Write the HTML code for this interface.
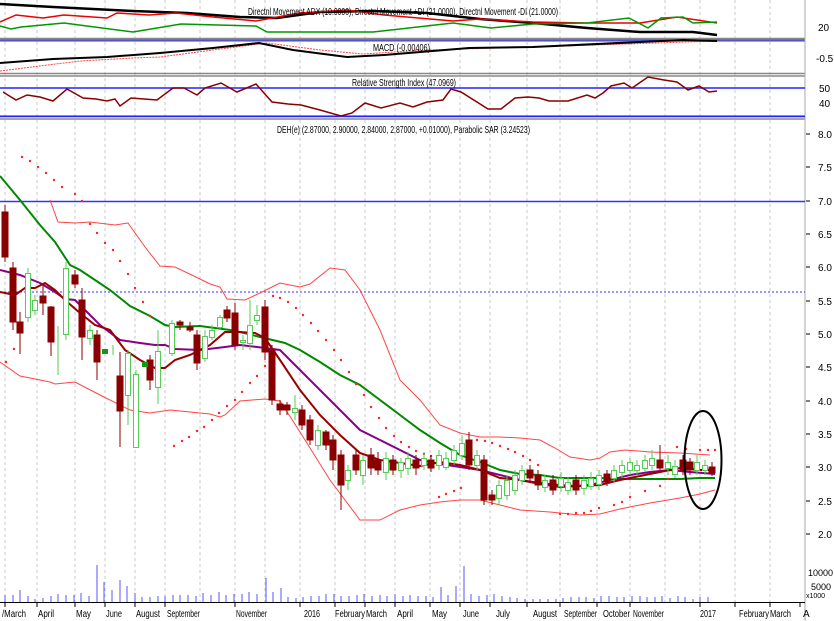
<!DOCTYPE html>
<html><head><style>
html,body{margin:0;padding:0;background:#fff;width:834px;height:621px;overflow:hidden}
svg{display:block;font-family:"Liberation Sans",Arial,sans-serif}
</style></head><body>
<svg width="834" height="621" viewBox="0 0 834 621" xmlns="http://www.w3.org/2000/svg">
<rect width="834" height="621" fill="#fff"/>
<g stroke="#c8c8c8" stroke-width="1" stroke-dasharray="3,3">
<path d="M5 0V602M37 0V602M75 0V602M105 0V602M135 0V602M165 0V602M200 0V602M235 0V602M265 0V602M300 0V602M335 0V602M365 0V602M395 0V602M430 0V602M460 0V602M490 0V602M527 0V602M560 0V602M597 0V602M630 0V602M665 0V602M700 0V602M735 0V602M770 0V602"/>
</g>
<g stroke="#888" stroke-width="1.5">
<path d="M0 38.5H805M0 41H805M0 73.5H805M0 76H805M0 116H805M0 119H805"/>
</g>
<path d="M0 40H805" stroke="#33f" stroke-width="1.2"/>
<path d="M805 0V621" stroke="#aaa"/>
<!-- ADX panel -->
<polyline fill="none" stroke="#000" stroke-width="2.5" points="0,4 53,7 133,11 187,13 240,17 277,18 320,12 373,11 427,13 480,19 533,23 587,28 640,32 693,32 717,35"/>
<polyline fill="none" stroke="#e00" stroke-width="1.5" points="0,22 16,15 43,18 64,15 107,18 117,13 149,15 176,13 213,17 256,21 299,13 347,10 384,15 453,21 480,19 533,22 587,23 640,23 677,17 717,23"/>
<polyline fill="none" stroke="#090" stroke-width="1.5" points="0,26 11,29 21,27 64,23 133,32 181,24 256,26 267,32 373,32 453,23 491,28 533,24 587,23 629,18 648,28 661,18 683,17 693,23 717,22"/>
<text x="248" y="15" font-size="10.5" fill="#000" textLength="310" lengthAdjust="spacingAndGlyphs">Directnl Movement ADX (10.0000), Directnl Movement +DI (21.0000), Directnl Movement -DI (21.0000)</text>
<!-- MACD panel -->
<polyline fill="none" stroke="#f44" stroke-width="1" stroke-dasharray="2,1" points="0,71 80,61 133,58 160,57 213,50 267,43 320,50 363,54 427,50 533,47 717,41"/>
<polyline fill="none" stroke="#000" stroke-width="2" points="0,63 53,59 107,57 160,53 213,48 259,43 293,50 347,57 384,55 469,48 533,47 640,42 683,40 717,41"/>
<text x="373" y="51" font-size="10.5" fill="#000" textLength="57" lengthAdjust="spacingAndGlyphs">MACD (-0.00406)</text>
<!-- RSI panel -->
<path d="M0 88H805M0 116.5H805" stroke="#22f" stroke-width="1.5"/>
<polyline fill="none" stroke="#800" stroke-width="1.5" points="3,92 16,100 27,95 40,97 53,101 67,89 83,98 96,99 107,101 115,99 120,106 131,98 144,99 157,100 173,88 184,88 197,95 205,88 221,83 237,92 256,84 272,102 288,104 301,105 320,110 341,116 352,113 365,103 381,108 400,103 413,107 427,102 443,100 451,89 461,92 488,109 501,109 515,98 528,97 539,98 549,101 568,101 587,95 595,98 603,93 611,86 624,83 632,88 648,77 664,80 677,82 688,90 699,86 709,92 717,91"/>
<text x="352" y="86" font-size="10.5" fill="#000" textLength="104" lengthAdjust="spacingAndGlyphs">Relative Strength Index (47.0969)</text>
<g font-size="10" fill="#000">
<text x="818" y="31">20</text>
<text x="816" y="62">-0.5</text>
<text x="819" y="92">50</text>
<text x="819" y="107">40</text>
</g>
<!-- main panel -->
<path d="M0 201.5H805" stroke="#33f" stroke-width="1.5"/>
<path d="M0 292H805" stroke="#33f" stroke-width="1" stroke-dasharray="2,2"/>
<text x="277" y="133" font-size="10.5" fill="#000" textLength="253" lengthAdjust="spacingAndGlyphs">DEH(e) (2.87000, 2.90000, 2.84000, 2.87000, +0.01000), Parabolic SAR (3.24523)</text>
<polyline fill="none" stroke="#f44" stroke-width="1" points="50,200 58,222 75,223 90,222 115,225 128,223 145,247 160,266 175,267 200,279 210,284 220,287 227,299 245,300 262,292 280,283 300,287 310,284 330,268 345,270 360,290 380,330 400,380 420,400 440,425 460,433 480,437 500,437 520,438 540,440 555,448 570,457 590,460 600,458 610,452 625,450 650,452 680,453 710,455"/>
<polyline fill="none" stroke="#f44" stroke-width="1" points="0,362 20,376 40,380 50,382 55,384 75,382 100,395 130,410 150,413 170,410 210,414 220,417 225,415 240,401 265,399 280,401 300,432 330,480 360,520 380,520 400,510 420,505 440,502 460,500 480,500 500,505 520,510 550,512 580,515 600,514 620,509 650,503 680,498 700,494 715,490"/>
<polyline fill="none" stroke="#080" stroke-width="2" points="0,176 20,200 40,225 55,242 70,265 80,270 95,280 110,290 130,306 150,316 165,325 175,327 200,326 230,330 240,332 260,337 285,343 300,350 320,362 340,375 360,385 380,400 400,415 420,430 440,443 460,455 480,462 500,470 520,474 540,475 560,478 580,478 600,478 620,479 640,479 660,479 680,479 700,478 715,478"/>
<polyline fill="none" stroke="#808" stroke-width="2" points="0,270 20,275 40,283 55,292 65,299 75,300 85,310 100,325 120,340 140,343 155,345 165,345 175,349 200,350 225,347 240,345 265,348 280,350 300,370 320,390 340,410 360,430 380,440 400,450 420,460 440,464 460,467 480,470 500,475 520,480 540,483 560,485 575,486 590,485 610,480 630,475 650,472 670,470 690,472 715,474"/>
<polyline fill="none" stroke="#900" stroke-width="2" points="0,292 15,295 25,288 35,288 45,283 55,290 65,300 80,313 95,325 110,330 125,350 140,360 155,368 165,368 175,360 190,355 210,345 225,332 240,332 255,333 265,338 280,360 300,390 320,415 340,435 360,453 380,460 400,463 420,466 440,462 460,465 480,470 500,478 520,480 540,484 560,487 580,486 600,485 620,480 640,476 660,472 680,468 700,470 715,470"/>
<g fill="#f22">
<circle cx="22" cy="157" r="1.2"/><circle cx="30" cy="161" r="1.2"/><circle cx="38" cy="167" r="1.2"/><circle cx="46" cy="173" r="1.2"/><circle cx="54" cy="180" r="1.2"/><circle cx="62" cy="187" r="1.2"/><circle cx="75" cy="194" r="1.2"/><circle cx="82" cy="201" r="1.2"/><circle cx="90" cy="224" r="1.2"/><circle cx="97" cy="233" r="1.2"/><circle cx="105" cy="243" r="1.2"/><circle cx="113" cy="250" r="1.2"/><circle cx="120" cy="261" r="1.2"/><circle cx="128" cy="274" r="1.2"/><circle cx="135" cy="288" r="1.2"/><circle cx="143" cy="302" r="1.2"/><circle cx="150" cy="316" r="1.2"/>
<circle cx="6" cy="362" r="1.2"/><circle cx="14" cy="349" r="1.2"/>
<circle cx="174" cy="446" r="1.2"/><circle cx="182" cy="441" r="1.2"/><circle cx="189" cy="437" r="1.2"/><circle cx="197" cy="431" r="1.2"/><circle cx="204" cy="427" r="1.2"/><circle cx="212" cy="420" r="1.2"/><circle cx="219" cy="413" r="1.2"/><circle cx="227" cy="406" r="1.2"/><circle cx="235" cy="400" r="1.2"/><circle cx="242" cy="392" r="1.2"/><circle cx="250" cy="383" r="1.2"/><circle cx="257" cy="376" r="1.2"/><circle cx="265" cy="366" r="1.2"/>
<circle cx="273" cy="296" r="1.2"/><circle cx="280" cy="298" r="1.2"/><circle cx="288" cy="302" r="1.2"/><circle cx="296" cy="308" r="1.2"/><circle cx="303" cy="315" r="1.2"/><circle cx="311" cy="323" r="1.2"/><circle cx="318" cy="331" r="1.2"/><circle cx="326" cy="340" r="1.2"/><circle cx="334" cy="350" r="1.2"/><circle cx="341" cy="360" r="1.2"/><circle cx="349" cy="372" r="1.2"/><circle cx="356" cy="384" r="1.2"/><circle cx="364" cy="395" r="1.2"/><circle cx="371" cy="407" r="1.2"/><circle cx="379" cy="418" r="1.2"/><circle cx="386" cy="428" r="1.2"/><circle cx="394" cy="436" r="1.2"/><circle cx="401" cy="442" r="1.2"/><circle cx="409" cy="447" r="1.2"/><circle cx="416" cy="451" r="1.2"/><circle cx="424" cy="454" r="1.2"/><circle cx="431" cy="456" r="1.2"/>
<circle cx="439" cy="497" r="1.2"/><circle cx="446" cy="494" r="1.2"/><circle cx="454" cy="491" r="1.2"/><circle cx="461" cy="488" r="1.2"/>
<circle cx="477" cy="440" r="1.2"/><circle cx="485" cy="441" r="1.2"/><circle cx="492" cy="443" r="1.2"/><circle cx="500" cy="446" r="1.2"/><circle cx="508" cy="449" r="1.2"/><circle cx="515" cy="452" r="1.2"/><circle cx="523" cy="456" r="1.2"/><circle cx="530" cy="460" r="1.2"/><circle cx="538" cy="465" r="1.2"/>
<circle cx="560" cy="514" r="1.2"/><circle cx="568" cy="514" r="1.2"/><circle cx="576" cy="513" r="1.2"/><circle cx="584" cy="513" r="1.2"/><circle cx="591" cy="511" r="1.2"/><circle cx="599" cy="508" r="1.2"/><circle cx="614" cy="505" r="1.2"/><circle cx="622" cy="502" r="1.2"/><circle cx="630" cy="497" r="1.2"/><circle cx="645" cy="491" r="1.2"/><circle cx="660" cy="486" r="1.2"/><circle cx="668" cy="479" r="1.2"/>
<circle cx="677" cy="447" r="1.2"/><circle cx="686" cy="449" r="1.2"/><circle cx="700" cy="450" r="1.2"/><circle cx="708" cy="450" r="1.2"/><circle cx="715" cy="450" r="1.2"/>
</g>
<g stroke="#800" fill="#800">
<path d="M5 205V262M13 262V330M20 312V354M43 285V315M51 306V356M75 270V288M82 288V360M97 330V380M120 352V447M150 355V390M180 320V330M190 322V332M197 330V370M227 306V322M235 303V350M265 300V360M272 345V405M280 400V415M287 402V415M302 405V430M310 415V445M326 430V450M333 435V470M341 450V510M356 450V475M371 448V475M378 452V475M393 455V475M416 455V475M431 455V472M469 432V470M484 455V505M492 490V505M530 465V482M538 470V490M553 475V495M576 475V495M607 470V486M660 445V470M683 455V475M690 458V475M712 462V476"/>
<rect x="2" y="212" width="6" height="45"/><rect x="10" y="268" width="6" height="54"/><rect x="17" y="322" width="6" height="11"/><rect x="40" y="296" width="6" height="7"/><rect x="48" y="307" width="6" height="35"/><rect x="72" y="275" width="6" height="9"/><rect x="79" y="300" width="6" height="37"/><rect x="94" y="335" width="6" height="27"/><rect x="117" y="376" width="6" height="35"/><rect x="147" y="360" width="6" height="20"/><rect x="177" y="322" width="6" height="3"/><rect x="187" y="327" width="6" height="3"/><rect x="194" y="335" width="6" height="28"/><rect x="224" y="310" width="6" height="8"/><rect x="232" y="313" width="6" height="32"/><rect x="262" y="307" width="6" height="45"/><rect x="269" y="350" width="6" height="50"/><rect x="277" y="404" width="6" height="6"/><rect x="284" y="405" width="6" height="5"/><rect x="299" y="410" width="6" height="15"/><rect x="307" y="420" width="6" height="20"/><rect x="323" y="432" width="6" height="13"/><rect x="330" y="440" width="6" height="20"/><rect x="338" y="455" width="6" height="30"/><rect x="353" y="455" width="6" height="15"/><rect x="368" y="455" width="6" height="13"/><rect x="375" y="460" width="6" height="10"/><rect x="390" y="460" width="6" height="10"/><rect x="413" y="460" width="6" height="8"/><rect x="428" y="460" width="6" height="8"/><rect x="466" y="440" width="6" height="25"/><rect x="481" y="460" width="6" height="40"/><rect x="489" y="495" width="6" height="5"/><rect x="527" y="470" width="6" height="8"/><rect x="535" y="475" width="6" height="10"/><rect x="550" y="480" width="6" height="10"/><rect x="573" y="480" width="6" height="10"/><rect x="604" y="474" width="6" height="8"/><rect x="657" y="460" width="6" height="8"/><rect x="680" y="460" width="6" height="10"/><rect x="687" y="462" width="6" height="8"/><rect x="709" y="467" width="6" height="6"/>
</g>
<g stroke="#5c5" fill="#fff">
<path d="M28 268V322M35 295V315M58 326V375M66 262V340M90 325V345M113 345V355M128 350V425M136 370V448M158 330V404M172 320V356M205 330V362M212 325V340M220 315V330M243 335V350M250 300V350M257 305V325M295 395V420M318 425V450M348 465V490M363 455V485M386 452V480M401 458V478M408 452V475M424 452V470M439 450V470M446 452V470M454 445V465M462 435V460M477 450V470M499 480V505M507 475V500M515 470V495M522 465V485M545 475V492M561 472V492M568 477V495M584 475V495M591 472V490M599 470V490M614 465V482M622 460V478M630 458V475M637 460V475M645 455V472M652 450V470M668 455V475M675 460V478M697 455V475M705 460V475"/>
<rect x="25.5" y="273.5" width="5" height="44"/><rect x="32.5" y="300.5" width="5" height="10"/><rect x="63.5" y="268.5" width="5" height="66"/><rect x="87.5" y="330.5" width="5" height="8"/><rect x="125.5" y="353.5" width="5" height="42"/><rect x="133.5" y="374.5" width="5" height="73"/><rect x="155.5" y="351.5" width="5" height="36"/><rect x="169.5" y="323.5" width="5" height="30"/><rect x="202.5" y="336.5" width="5" height="22"/><rect x="209.5" y="330.5" width="5" height="7"/><rect x="217.5" y="317.5" width="5" height="10"/><rect x="240.5" y="340.5" width="5" height="2"/><rect x="247.5" y="325.5" width="5" height="18"/><rect x="254.5" y="315.5" width="5" height="5"/><rect x="292.5" y="408.5" width="5" height="4"/><rect x="315.5" y="430.5" width="5" height="15"/><rect x="345.5" y="470.5" width="5" height="10"/><rect x="360.5" y="460.5" width="5" height="15"/><rect x="383.5" y="458.5" width="5" height="14"/><rect x="398.5" y="462.5" width="5" height="8"/><rect x="405.5" y="458.5" width="5" height="10"/><rect x="421.5" y="458.5" width="5" height="7"/><rect x="436.5" y="455.5" width="5" height="10"/><rect x="443.5" y="458.5" width="5" height="9"/><rect x="451.5" y="450.5" width="5" height="10"/><rect x="459.5" y="443.5" width="5" height="12"/><rect x="474.5" y="455.5" width="5" height="10"/><rect x="496.5" y="485.5" width="5" height="13"/><rect x="504.5" y="480.5" width="5" height="15"/><rect x="512.5" y="475.5" width="5" height="15"/><rect x="519.5" y="470.5" width="5" height="10"/><rect x="542.5" y="480.5" width="5" height="7"/><rect x="558.5" y="478.5" width="5" height="8"/><rect x="565.5" y="482.5" width="5" height="8"/><rect x="581.5" y="480.5" width="5" height="8"/><rect x="588.5" y="478.5" width="5" height="8"/><rect x="596.5" y="475.5" width="5" height="9"/><rect x="611.5" y="470.5" width="5" height="8"/><rect x="619.5" y="465.5" width="5" height="7"/><rect x="627.5" y="462.5" width="5" height="8"/><rect x="634.5" y="465.5" width="5" height="5"/><rect x="642.5" y="460.5" width="5" height="8"/><rect x="649.5" y="458.5" width="5" height="7"/><rect x="665.5" y="462.5" width="5" height="6"/><rect x="672.5" y="466.5" width="5" height="8"/><rect x="694.5" y="462.5" width="5" height="8"/><rect x="702.5" y="465.5" width="5" height="5"/>
</g>
<g fill="#191"><rect x="102" y="349" width="6" height="5"/><rect x="142" y="362" width="6" height="5"/></g>
<ellipse cx="703" cy="460" rx="18.5" ry="49" fill="none" stroke="#000" stroke-width="2"/>
<g stroke="#000" stroke-width="1">
<path d="M806 134h4M806 167h4M806 201h4M806 234h4M806 267h4M806 301h4M806 334h4M806 367h4M806 401h4M806 434h4M806 467h4M806 501h4M806 534h4"/>
</g>
<g font-size="10" fill="#000">
<text x="818" y="138">8.0</text><text x="818" y="171">7.5</text><text x="818" y="205">7.0</text><text x="818" y="238">6.5</text><text x="818" y="271">6.0</text><text x="818" y="305">5.5</text><text x="818" y="338">5.0</text><text x="818" y="371">4.5</text><text x="818" y="405">4.0</text><text x="818" y="438">3.5</text><text x="818" y="471">3.0</text><text x="818" y="505">2.5</text><text x="818" y="538">2.0</text>
<text x="808" y="576" font-size="9">10000</text><text x="811" y="590" font-size="9">5000</text><text x="806" y="598" font-size="7">x1000</text>
</g>
<!-- volume -->
<g stroke="#55f" stroke-width="1">
<path d="M5 602V595M13 602V595M20 602V590M28 602V596M35 602V599M43 602V598M51 602V596M58 602V594M66 602V595M74 602V595M81 602V593M89 602V596M97 602V565M104 602V582M112 602V590M120 602V580M127 602V586M135 602V593M142 602V597M150 602V597M158 602V596M165 602V596M173 602V595M180 602V595M188 602V595M196 602V596M203 602V593M211 602V595M219 602V592M226 602V595M234 602V594M242 602V594M249 602V592M257 602V594M266 602V578M273 602V592M281 602V588M288 602V597M296 602V598M303 602V597M311 602V596M319 602V596M326 602V594M334 602V594M341 602V596M349 602V596M357 602V595M364 602V594M372 602V596M380 602V595M387 602V596M395 602V594M403 602V596M410 602V595M418 602V596M426 602V596M433 602V597M441 602V587M448 602V595M456 602V586M464 602V566M471 602V594M479 602V596M487 602V595M494 602V594M502 602V596M510 602V597M517 602V598M525 602V599M533 602V599M540 602V599M548 602V599M556 602V599M563 602V598M571 602V597M579 602V597M586 602V597M594 602V598M601 602V596M609 602V596M617 602V597M624 602V597M632 602V596M640 602V596M647 602V597M655 602V597M662 602V596M670 602V598M678 602V596M685 602V597M693 602V599M700 602V597M708 602V597"/>
</g>
<path d="M0 602.5H805" stroke="#000"/>
<g stroke="#000"><path d="M5 602V607M37 602V607M75 602V607M105 602V607M135 602V607M165 602V607M235 602V607M300 602V607M335 602V607M365 602V607M395 602V607M430 602V607M460 602V607M490 602V607M527 602V607M560 602V607M597 602V607M630 602V607M700 602V607M735 602V607M770 602V607M800 602V607"/></g>
<g font-size="10" fill="#000" lengthAdjust="spacingAndGlyphs">
<text x="2" y="617" textLength="24" lengthAdjust="spacingAndGlyphs">/March</text>
<text x="38" y="617" textLength="16" lengthAdjust="spacingAndGlyphs">April</text>
<text x="76" y="617" textLength="15" lengthAdjust="spacingAndGlyphs">May</text>
<text x="106" y="617" textLength="16" lengthAdjust="spacingAndGlyphs">June</text>
<text x="136" y="617" textLength="24" lengthAdjust="spacingAndGlyphs">August</text>
<text x="167" y="617" textLength="33" lengthAdjust="spacingAndGlyphs">September</text>
<text x="236" y="617" textLength="31" lengthAdjust="spacingAndGlyphs">November</text>
<text x="304" y="617" textLength="16" lengthAdjust="spacingAndGlyphs">2016</text>
<text x="335" y="617" textLength="30" lengthAdjust="spacingAndGlyphs">February</text>
<text x="366" y="617" textLength="21" lengthAdjust="spacingAndGlyphs">March</text>
<text x="397" y="617" textLength="16" lengthAdjust="spacingAndGlyphs">April</text>
<text x="432" y="617" textLength="15" lengthAdjust="spacingAndGlyphs">May</text>
<text x="463" y="617" textLength="16" lengthAdjust="spacingAndGlyphs">June</text>
<text x="496" y="617" textLength="14" lengthAdjust="spacingAndGlyphs">July</text>
<text x="533" y="617" textLength="24" lengthAdjust="spacingAndGlyphs">August</text>
<text x="564" y="617" textLength="33" lengthAdjust="spacingAndGlyphs">September</text>
<text x="603" y="617" textLength="27" lengthAdjust="spacingAndGlyphs">October</text>
<text x="633" y="617" textLength="31" lengthAdjust="spacingAndGlyphs">November</text>
<text x="700" y="617" textLength="16" lengthAdjust="spacingAndGlyphs">2017</text>
<text x="739" y="617" textLength="30" lengthAdjust="spacingAndGlyphs">February</text>
<text x="770" y="617" textLength="21" lengthAdjust="spacingAndGlyphs">March</text>
<text x="803" y="617">A</text>
</g>
</svg>
</body></html>
